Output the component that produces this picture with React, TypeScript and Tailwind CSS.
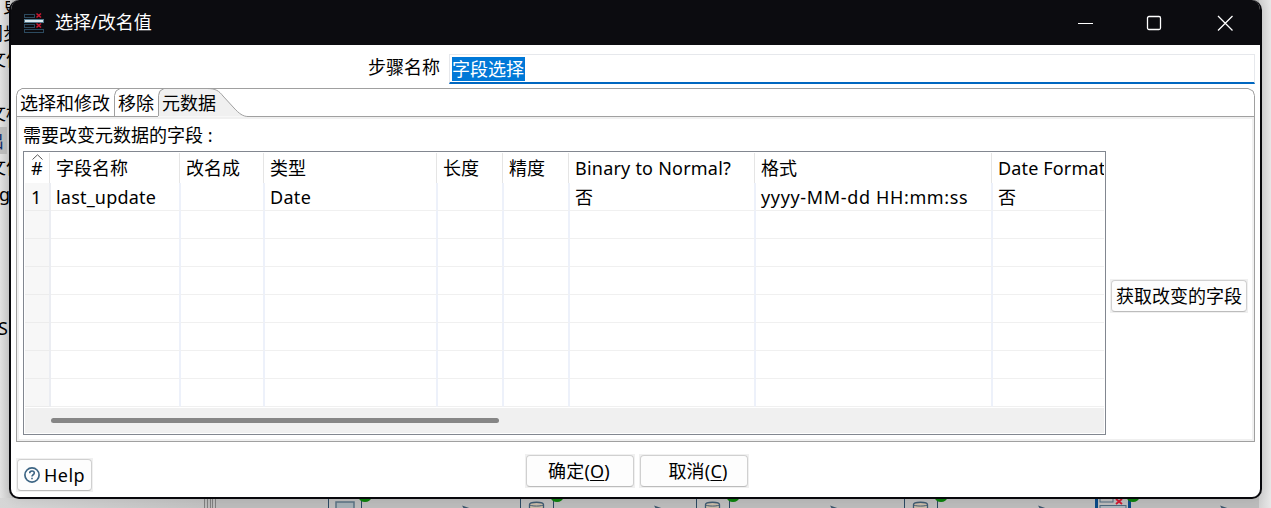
import React from 'react';

type Cell = { text: string; track?: string };
type Column = { width: string; head: Cell; value: Cell };

const columns: Column[] = [
  { width: 'w-[130px]', head: { text: '字段名称' }, value: { text: 'last_update', track: 'tracking-[0.2px]' } },
  { width: 'w-[84px]', head: { text: '改名成' }, value: { text: '' } },
  { width: 'w-[173px]', head: { text: '类型' }, value: { text: 'Date', track: 'tracking-[0.3px]' } },
  { width: 'w-[66px]', head: { text: '长度' }, value: { text: '' } },
  { width: 'w-[66px]', head: { text: '精度' }, value: { text: '' } },
  { width: 'w-[186px]', head: { text: 'Binary to Normal?', track: 'tracking-[0.22px]' }, value: { text: '否' } },
  { width: 'w-[237px]', head: { text: '格式' }, value: { text: 'yyyy-MM-dd HH:mm:ss', track: 'tracking-[0.65px]' } },
  { width: 'w-[111px]', head: { text: 'Date Format', track: 'tracking-[0.15px]' }, value: { text: '否' } },
];

const sideTexts = [
  { place: 'left-[3px] top-[-7px]', text: '更' },
  { place: 'left-[-15px] top-[20px]', text: '同步' },
  { place: 'left-[-12px] top-[46px]', text: '文件' },
  { place: 'left-[-12px] top-[100px]', text: '文档' },
  { place: 'left-[-12px] top-[154px]', text: '文件' },
];

function Node({ left, database }: { left: string; database?: boolean }) {
  return (
    <svg className={`absolute top-[497px] ${left}`} width="150" height="11" viewBox="0 0 150 11" fill="none">
      <path d="M.5 0V11M33.5 0V11" stroke="#2c4a63" />
      {database ? (
        <>
          <path d="M9.5 11V7.5C9.5 4.500 23.500 4.500 23.500 7.500V11" fill="#c9bba8" stroke="#3f5b72" strokeWidth="1.300" />
          <path d="M9.500 7.500C9.500 9.600 23.500 9.600 23.500 7.500" stroke="#3f5b72" />
        </>
      ) : (
        <rect x="8" y="5" width="18" height="12" fill="#a5b0b6" stroke="#5b7384" strokeWidth="1.500" />
      )}
      <ellipse cx="37" cy="1" rx="6" ry="4" fill="#0d820d" />
      <path d="M134 8.500L144 12H136Z" fill="#3b566c" />
    </svg>
  );
}

function Backdrop() {
  return (
    <div className="absolute inset-0 bg-[#bcbcbc]">
      <div className="absolute left-0 top-0 h-full w-[12px] bg-linear-to-r from-[#e2e2e2] to-[#c8c8c8]" />
      <div className="absolute right-0 top-0 h-full w-[12px] bg-linear-to-r from-[#d2d2d2] to-[#e8e8e8]" />
      <div className="absolute left-0 top-[127px] h-[27px] w-[7px] bg-[#bdbdbd]" />
      <div className="absolute left-0 top-0 h-[400px] w-[10px] overflow-hidden">
        {sideTexts.map((t, i) => (
          <span key={i} className={`absolute whitespace-nowrap leading-[27px] ${t.place}`}>
            {t.text}
          </span>
        ))}
        <span className="absolute left-[-14px] top-[128px] leading-[27px] text-[#10306c]">出</span>
        <span className="absolute left-[-1px] top-[181px] leading-[27px]">g</span>
        <span className="absolute left-[-2px] top-[315px] leading-[27px]">S</span>
      </div>
      <div className="absolute left-0 top-[498px] h-[10px] w-[204px] bg-linear-to-r from-[#d6d6d6] to-[#c2c2c2]" />
      <svg className="absolute left-[203px] top-[498px]" width="14" height="10">
        <path d="M1.500 0V10M4.500 0V10M7.500 0V10M9.500 0V10M12.500 0V10" stroke="#808080" />
      </svg>
      <Node left="left-[328px]" />
      <Node left="left-[520px]" database />
      <Node left="left-[696px]" database />
      <Node left="left-[904px]" database />
      <svg className="absolute left-[1095px] top-[498px]" width="150" height="10" fill="none">
        <path d="M1.500 0V10M34.500 0V10" stroke="#0b4a87" strokeWidth="3" />
        <rect x="5" y="-4" width="13" height="8" stroke="#4e6a7e" />
        <rect x="5" y="7.500" width="26" height="8" stroke="#4e6a7e" fill="#aab4bb" />
        <path d="M21 1L27 6M27 1L21 6" stroke="#d01830" strokeWidth="1.800" />
        <ellipse cx="38" cy="0" rx="6" ry="4" fill="#0d820d" />
        <path d="M125 7.500L135 11H127Z" fill="#3b566c" />
      </svg>
    </div>
  );
}

function TitleBar() {
  return (
    <header className="flex h-[45px] shrink-0 items-center bg-[#0c0c10] pl-[12px] text-white">
      <svg width="24" height="22" viewBox="0 0 24 22" fill="none">
        <rect x="1.500" y="2.500" width="10" height="3" stroke="#2c4a5f" />
        <rect x="1" y="7" width="20" height="4" fill="#52788c" />
        <rect x="2" y="8" width="18" height="2" fill="#dbe9ee" />
        <rect x="1.500" y="12.500" width="10" height="3" stroke="#2c4a5f" />
        <rect x="1.500" y="17.500" width="19" height="3" stroke="#2c4a5f" />
        <path d="M13.500 1.500L18 5.500M18 1.500L13.500 5.500M13.500 11.500L18 15.500M18 11.500L13.500 15.500" stroke="#c91831" strokeWidth="1.600" />
      </svg>
      <h1 className="ml-[8px] flex-1 leading-[27px]">选择/改名值</h1>
      <div className="flex items-center pr-[27px]">
        <svg width="16" height="16" viewBox="0 0 16 16"><path d="M1 8.500H16" stroke="#fff" /></svg>
        <svg className="ml-[53px]" width="16" height="16" viewBox="0 0 16 16"><rect x="1.500" y="1.500" width="13" height="13" rx="1.500" fill="none" stroke="#fff" strokeWidth="1.300" /></svg>
        <svg className="ml-[55px]" width="16" height="16" viewBox="0 0 16 16"><path d="M1 1L15.500 15.500M15.500 1L1 15.500" stroke="#fff" strokeWidth="1.300" /></svg>
      </div>
    </header>
  );
}

function PushButton({ className, children }: { className: string; children: React.ReactNode }) {
  return (
    <div className={`shrink-0 bg-[#f0f0f0] p-px ${className}`}>
      <button className="flex h-full w-full items-center justify-center whitespace-nowrap rounded-[4px] border border-[#d0d0d0] border-b-[#bcbcbc] bg-[#fdfdfd] leading-[27px]">
        {children}
      </button>
    </div>
  );
}

function Tabs() {
  return (
    <div className="relative flex h-[29px] shrink-0 pl-[4px] leading-[31px]">
      <svg className="absolute left-0 top-0" width="1239" height="31" viewBox="0 0 1239 31" fill="none">
        <path d="M142 29V7C142 3 144 .5 149 .5H191C200 .5 203 3 207 8L218 20C223 25.500 227 28.500 232 28.500H142Z" fill="#f0f0f0" />
        <path d="M.5 29V7.500L2 3L6 .5H1232L1237 3L1238.500 7.500V29" stroke="#a0a0a0" />
        <path d="M.5 28.500H142M231 28.500H1238.500" stroke="#a0a0a0" />
        <path d="M98.500 28V7.500L100 3L104 .5M142.500 28V7.500L144 3L148 .5M191 .5C200 .5 203 3 207 8L218 20C223 25.500 227 28.500 232 28.500" stroke="#a0a0a0" />
      </svg>
      <span className="relative w-[98px]">选择和修改</span>
      <span className="relative w-[44px]">移除</span>
      <span className="relative">元数据</span>
    </div>
  );
}

function FieldTable() {
  return (
    <div className="flex h-[284px] w-[1083px] shrink-0 flex-col border border-[#828790] bg-white p-px">
      <div className="flex h-[30px] leading-[30px]">
        <div className="relative w-[26px] pl-[6px] pr-px">
          <div className="absolute right-px top-0 h-full w-px bg-[#e5e5e5]" />
          <svg className="absolute left-[7px] top-px" width="12" height="6"><path d="M.5 5.500L5.500 .8L10.500 5.500" stroke="#555" fill="none" /></svg>
          #
        </div>
        {columns.map((c, i) => (
          <div key={i} className={`relative overflow-hidden whitespace-nowrap pl-[5px] ${c.head.track ?? ''} ${c.width}`}>
            {i < 7 && <div className="absolute right-px top-0 h-full w-px bg-[#e5e5e5]" />}
            {c.head.text}
          </div>
        ))}
      </div>
      {Array.from({ length: 8 }, (_, r) => (
        <div key={r} className="flex h-[28px] shrink-0 leading-[29px]">
          <div className="w-[26px] border-b border-r-2 border-b-[#ececec] border-r-[#ebedf2] bg-[#f7f7f7] pl-[6px]">{r === 0 ? '1' : ''}</div>
          {columns.map((c, i) => (
            <div key={i} className={`overflow-hidden whitespace-nowrap border-b border-b-[#f0f0f0] border-r-[#edf1fa] pl-[5px] ${i < 7 ? 'border-r-2' : ''} ${c.value.track ?? ''} ${c.width}`}>
              {r === 0 ? c.value.text : ''}
            </div>
          ))}
        </div>
      ))}
      <div className="mt-px flex flex-1 items-center bg-[#f0f0f0] pl-[26px]">
        <div className="h-[5px] w-[448px] rounded-full bg-[#868686]" />
      </div>
    </div>
  );
}

export default function App() {
  return (
    <div className="relative h-[508px] w-[1271px] overflow-hidden font-['Noto_Sans','Noto_Sans_CJK_SC',sans-serif] text-[18px] text-black">
      <Backdrop />
      <main className="absolute left-[9px] top-0 flex h-[499px] w-[1253px] flex-col overflow-hidden rounded-[10px] border-2 border-t-0 border-[#08080c] bg-white shadow-[0_0_12px_rgba(0,0,0,0.1)]">
        <TitleBar />
        <div className="mt-[9px] flex h-[30px] shrink-0 pr-[5px]">
          <label className="w-[438px] pr-[9px] text-right leading-[26px]">步骤名称</label>
          <div className="flex-1 border border-b-2 border-[#e6e8ec] border-b-[#0067c0] bg-white pl-[2px] pt-[2px]">
            <span className="block h-[24px] w-[73px] whitespace-nowrap bg-[#0078d7] leading-[25px] text-white">字段选择</span>
          </div>
        </div>
        <section className="ml-[5px] mt-[4px] flex h-[354px] w-[1239px] shrink-0 flex-col">
          <Tabs />
          <div className="flex flex-1 flex-col border border-t-0 border-[#a0a0a0]">
            <div className="flex flex-1 flex-col border-2 border-[#f0f0f0] pl-[4px]">
              <p className="h-[32px] leading-[32px]">需要改变元数据的字段 :</p>
              <div className="flex items-center">
                <FieldTable />
                <PushButton className="ml-[4px] mt-[6px] h-[34px] w-[138px]">获取改变的字段</PushButton>
              </div>
            </div>
          </div>
        </section>
        <footer className="flex flex-1 items-start pl-[5px]">
          <PushButton className="mt-[16px] h-[34px] w-[77px]">
            <svg className="mr-[4px]" width="16" height="16" viewBox="0 0 16 16" fill="none">
              <circle cx="8" cy="8" r="7.100" stroke="#3d6584" strokeWidth="1.700" />
              <path d="M5.700 6.300C5.700 3.300 10.300 3.300 10.300 6C10.300 7.800 8 7.700 8 9.500M8 10.700V12.300" stroke="#3d6584" strokeWidth="1.600" />
            </svg>
            <span className="tracking-[0.4px]">Help</span>
          </PushButton>
          <PushButton className="ml-[432px] mt-[12px] h-[34px] w-[110px]"><span className="-ml-[2px] tracking-[0.2px]">确定(<u className="underline-offset-2">O</u>)</span></PushButton>
          <PushButton className="ml-[4px] mt-[12px] h-[34px] w-[110px]"><span className="pl-[8px] tracking-[0.2px]">取消(<u className="underline-offset-2">C</u>)</span></PushButton>
        </footer>
      </main>
    </div>
  );
}
